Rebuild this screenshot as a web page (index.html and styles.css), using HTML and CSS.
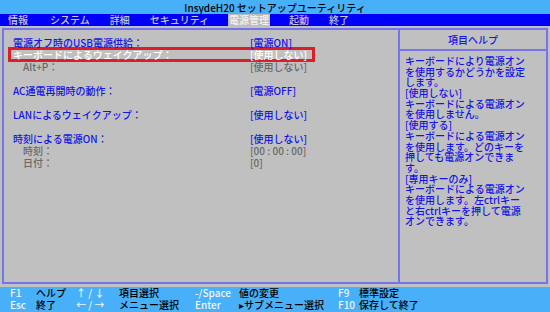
FILE: index.html
```html
<!DOCTYPE html>
<html lang="ja">
<head>
  <meta charset="UTF-8" />
  <title>InsydeH20 セットアップユーティリティ</title>
  <link rel="stylesheet" href="styles.css">
</head>
<body>
  <header class="title-bar">InsydeH20 セットアップユーティリティ</header>

  <nav class="menu">
    <span>情報</span>
    <span>システム</span>
    <span>詳細</span>
    <span>セキュリティ</span>
    <span class="active">電源管理</span>
    <span>起動</span>
    <span>終了</span>
  </nav>

  <main class="screen">
    <div class="frame">

      <section class="settings">
        <div class="row"><span>電源オフ時のUSB電源供給：</span><span>[電源ON]</span></div>
        <div class="row sel"><span>キーボードによるウェイクアップ：</span><span>[使用しない]</span></div>
        <div class="row dim"><span class="sub">Alt+P：</span><span>[使用しない]</span></div>
        <div class="row empty"></div>
        <div class="row"><span>AC通電再開時の動作：</span><span>[電源OFF]</span></div>
        <div class="row empty"></div>
        <div class="row"><span>LANによるウェイクアップ：</span><span>[使用しない]</span></div>
        <div class="row empty"></div>
        <div class="row"><span>時刻による電源ON：</span><span>[使用しない]</span></div>
        <div class="row dim"><span class="sub">時刻：</span><span>[00 : 00 : 00]</span></div>
        <div class="row dim"><span class="sub">日付：</span><span>[0]</span></div>
      </section>

      <aside class="help">
        <div class="help-title">項目ヘルプ</div>
        <div class="help-text">
          <p>キーボードにより電源オン</p>
          <p>を使用するかどうかを設定</p>
          <p>します。</p>
          <p>[使用しない]</p>
          <p>キーボードによる電源オン</p>
          <p>を使用しません。</p>
          <p>[使用する]</p>
          <p>キーボードによる電源オン</p>
          <p>を使用します。どのキーを</p>
          <p>押しても電源オンできま</p>
          <p>す。</p>
          <p>[専用キーのみ]</p>
          <p>キーボードによる電源オン</p>
          <p>を使用します。左ctrlキー</p>
          <p>と右ctrlキーを押して電源</p>
          <p>オンできます。</p>
        </div>
      </aside>

    </div>
  </main>

  <footer class="keys">
    <span class="key">F1</span><span>ヘルプ</span><span class="key">↑ / ↓</span><span>項目選択</span>
    <span class="key">-/Space</span><span>値の変更</span><span class="key">F9</span><span>標準設定</span>
    <span class="key">Esc</span><span>終了</span><span class="key">← / →</span><span>メニュー選択</span>
    <span class="key">Enter</span><span>▸サブメニュー選択</span><span class="key">F10</span><span>保存して終了</span>
  </footer>
</body>
</html>
```

FILE: styles.css
```css
* {
  box-sizing: border-box;
}

html, body {
  height: 100%;
}

body {
  margin: 0;
  display: flex;
  flex-direction: column;
  font-family: "Noto Sans CJK JP", "DejaVu Sans", sans-serif;
  font-size: 10px;
  font-weight: 500;
  background: #c0c0c0;
  color: #1414e6;
  overflow: hidden;
}

.title-bar {
  height: 14px;
  line-height: 15px;
  text-align: center;
  background: #48b0f8;
  color: #000;
}

.menu {
  height: 12px;
  display: flex;
  gap: 20px;
  padding-left: 8px;
  background: #0000f8;
  color: #c4c4d8;
  line-height: 12px;
}

.menu span:first-child {
  margin-right: 2px;
}

.menu .active {
  background: #bcbcbc;
  color: #f4f4f4;
  padding: 0 1px;
  margin-left: -1px;
  margin-right: -1px;
}

.screen {
  flex: 1;
  padding: 2px 2px 3px 2px;
  display: flex;
}

.frame {
  flex: 1;
  display: flex;
  border: 2px solid #7474ec;
}

.settings {
  width: 394px;
  padding: 7px 0 0 9px;
  line-height: 12px;
}

.row {
  display: grid;
  grid-template-columns: 237px auto;
  height: 12px;
  white-space: nowrap;
}

.row.sel {
  width: 307px;
  height: 15px;
  margin: -2px 0 -1px -5px;
  padding: 2px 0 1px 5px;
  box-shadow: inset 0 0 0 3px #dc1e28;
  color: #fff;
}

.row.dim {
  color: #686868;
}

.sub {
  padding-left: 10px;
}

.help {
  flex: 1;
  border-left: 2px solid #7474ec;
}

.help-title {
  height: 21px;
  line-height: 19px;
  text-align: center;
  border-bottom: 2px solid #7474ec;
}

.help-text {
  padding: 5px 0 0 5px;
  white-space: nowrap;
}

.help-text p {
  margin: 0;
  height: 10.7px;
  line-height: 10.7px;
}

.keys {
  height: 25px;
  display: grid;
  grid-template-columns: 26px 40px 43px 76px 44px 99px 21px auto;
  grid-auto-rows: 12px;
  padding: 0 0 0 10px;
  line-height: 12px;
  background: #48b0f8;
  color: #000;
  white-space: nowrap;
}

.keys .key {
  color: #f4f4f4;
}
```
